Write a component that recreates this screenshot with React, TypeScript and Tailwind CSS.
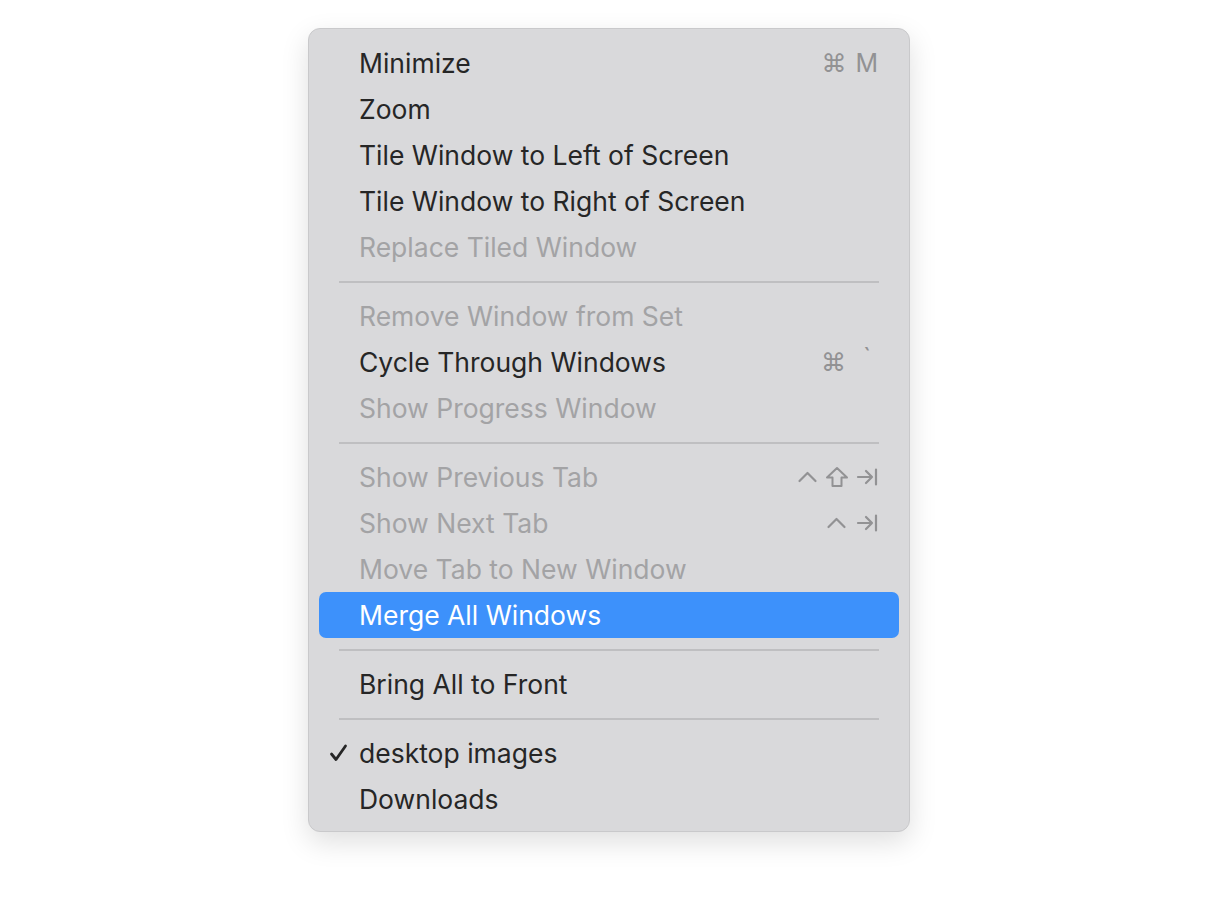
import { ReactNode } from "react";

type Item =
  | { kind: "item"; label: string; disabled?: boolean; active?: boolean; checked?: boolean; shortcut?: ReactNode }
  | { kind: "sep" };

function Caret() {
  return (
    <svg width="21" height="16" viewBox="0 0 21 16" fill="none" stroke="currentColor" strokeWidth="2.2" strokeLinecap="round" strokeLinejoin="round">
      <path d="M2.5 12 L10.5 4 L18.5 12" />
    </svg>
  );
}

function Shift() {
  return (
    <svg width="24" height="22" viewBox="0 0 24 22" fill="none" stroke="currentColor" strokeWidth="2" strokeLinejoin="round">
      <path d="M12 2 L22 11.5 L16.5 11.5 L16.5 20 L7.5 20 L7.5 11.5 L2 11.5 Z" />
    </svg>
  );
}

function TabKey() {
  return (
    <svg width="22" height="20" viewBox="0 0 22 20" fill="none" stroke="currentColor" strokeWidth="2.2" strokeLinecap="round" strokeLinejoin="round">
      <path d="M2 10 H16 M10 4 L16 10 L10 16 M20 2.5 V17.5" />
    </svg>
  );
}

const items: Item[] = [
  {
    kind: "item",
    label: "Minimize",
    shortcut: (
      <span className="flex items-center gap-[9px]">
        <span>⌘</span>
        <span>M</span>
      </span>
    ),
  },
  { kind: "item", label: "Zoom" },
  { kind: "item", label: "Tile Window to Left of Screen" },
  { kind: "item", label: "Tile Window to Right of Screen" },
  { kind: "item", label: "Replace Tiled Window", disabled: true },
  { kind: "sep" },
  { kind: "item", label: "Remove Window from Set", disabled: true },
  {
    kind: "item",
    label: "Cycle Through Windows",
    shortcut: (
      <span className="flex items-center gap-[17px] pr-[7px]">
        <span>⌘</span>
        <span className="-translate-y-[5px]">`</span>
      </span>
    ),
  },
  { kind: "item", label: "Show Progress Window", disabled: true },
  { kind: "sep" },
  {
    kind: "item",
    label: "Show Previous Tab",
    disabled: true,
    shortcut: (
      <span className="flex items-center gap-[7px]">
        <Caret />
        <Shift />
        <TabKey />
      </span>
    ),
  },
  {
    kind: "item",
    label: "Show Next Tab",
    disabled: true,
    shortcut: (
      <span className="flex items-center gap-[9px]">
        <Caret />
        <TabKey />
      </span>
    ),
  },
  { kind: "item", label: "Move Tab to New Window", disabled: true },
  { kind: "item", label: "Merge All Windows", active: true },
  { kind: "sep" },
  { kind: "item", label: "Bring All to Front" },
  { kind: "sep" },
  { kind: "item", label: "desktop images", checked: true },
  { kind: "item", label: "Downloads" },
];

function MenuRow({ item }: { item: Extract<Item, { kind: "item" }> }) {
  const text = item.active
    ? "text-white"
    : item.disabled
      ? "text-[#a3a3a5]"
      : "text-[#262626]";
  return (
    <div
      className={`relative flex h-[46px] items-center rounded-[7px] pl-[40px] pr-[21px] ${
        item.active ? "bg-[#3d91fb]" : ""
      }`}
    >
      {item.checked && (
        <svg
          className="absolute left-[10px] top-[14px]"
          width="19"
          height="18"
          viewBox="0 0 19 18"
          fill="none"
          stroke="#262626"
          strokeWidth="2.8"
          strokeLinecap="round"
          strokeLinejoin="round"
        >
          <path d="M2.5 10 L7 15.5 L16.5 2" />
        </svg>
      )}
      <span className={`flex-1 text-[26.5px] leading-none ${text}`}>{item.label}</span>
      {item.shortcut && (
        <span className="flex items-center text-[25px] leading-none text-[#929294]">{item.shortcut}</span>
      )}
    </div>
  );
}

export default function App() {
  return (
    <div
      className="flex min-h-[923px] w-full justify-center bg-white pt-[28px]"
      style={{ fontFamily: "Inter, 'Noto Sans', 'DejaVu Sans', sans-serif" }}
    >
      <div className="ml-[2px] flex w-[602px] flex-col self-start rounded-[12px] border border-[#c9c9cb] bg-[#d9d9db] px-[10px] pb-[9px] pt-[11px] shadow-[0_10px_28px_rgba(0,0,0,0.13)]">
        {items.map((item, i) =>
          item.kind === "sep" ? (
            <div key={i} className="flex h-[23px] items-center px-[20px]">
              <div className="h-[2px] w-full bg-[#bfbfc1]" />
            </div>
          ) : (
            <MenuRow key={i} item={item} />
          )
        )}
      </div>
    </div>
  );
}
